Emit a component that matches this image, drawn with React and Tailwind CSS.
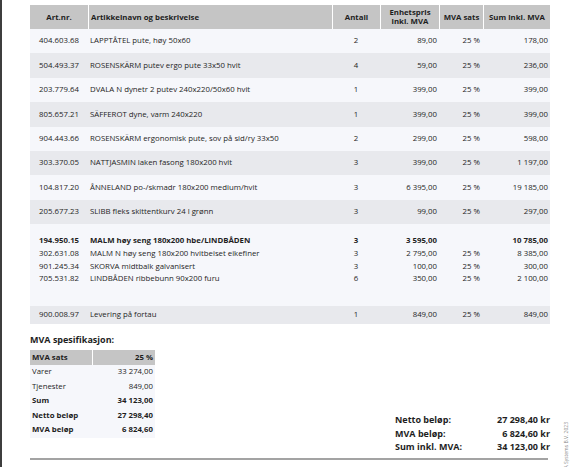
const cols = ['w-[58px]', 'w-[244px]', 'w-[48px]', 'w-[59px]', 'w-[44px]', 'w-[67px]']

const rows = [
  ['404.603.68', 'LAPPTÅTEL pute, høy 50x60', '2', '89,00', '25 %', '178,00'],
  ['504.493.37', 'ROSENSKÄRM putev ergo pute 33x50 hvit', '4', '59,00', '25 %', '236,00'],
  ['203.779.64', 'DVALA N dynetr 2 putev 240x220/50x60 hvit', '1', '399,00', '25 %', '399,00'],
  ['805.657.21', 'SÄFFEROT dyne, varm 240x220', '1', '399,00', '25 %', '399,00'],
  ['904.443.66', 'ROSENSKÄRM ergonomisk pute, sov på sid/ry 33x50', '2', '299,00', '25 %', '598,00'],
  ['303.370.05', 'NATTJASMIN laken fasong 180x200 hvit', '3', '399,00', '25 %', '1 197,00'],
  ['104.817.20', 'ÅNNELAND po-/skmadr 180x200 medium/hvit', '3', '6 395,00', '25 %', '19 185,00'],
  ['205.677.23', 'SLIBB fleks skittentkurv 24 l grønn', '3', '99,00', '25 %', '297,00'],
]

const group = [
  ['194.950.15', 'MALM høy seng 180x200 hbe/LINDBÅDEN', '3', '3 595,00', '', '10 785,00', true],
  ['302.631.08', 'MALM N høy seng 180x200 hvitbeiset eikefiner', '3', '2 795,00', '25 %', '8 385,00'],
  ['901.245.34', 'SKORVA midtbalk galvanisert', '3', '100,00', '25 %', '300,00'],
  ['705.531.82', 'LINDBÅDEN ribbebunn 90x200 furu', '6', '350,00', '25 %', '2 100,00'],
]

function Cells({ r }) {
  return (
    <>
      <div className={`${cols[0]} text-center`}>{r[0]}</div>
      <div className={`${cols[1]} pl-[2px] whitespace-nowrap`}>{r[1]}</div>
      <div className={`${cols[2]} text-center`}>{r[2]}</div>
      <div className={`${cols[3]} text-right pr-[2px]`}>{r[3]}</div>
      <div className={`${cols[4]} text-right pr-[3px]`}>{r[4]}</div>
      <div className={`${cols[5]} text-right pr-[2px]`}>{r[5]}</div>
    </>
  )
}

export default function App() {
  return (
    <div
      className="relative w-[575px] h-[467px] overflow-hidden bg-white border-l-2 border-[#3d3d3d] text-[#1e1e1e] text-[7.8px]"
      style={{ fontFamily: '"Open Sans", "Noto Sans", sans-serif' }}
    >
      <div className="pl-[28px] pt-[5px] w-[548px]">
        {/* items table */}
        <div className="w-[520px]">
          <div className="flex h-[24px] bg-[#c5c5c5] font-bold leading-[9px]">
            <div className={`${cols[0]} flex items-center justify-center`}>Art.nr.</div>
            <div className={`${cols[1]} flex items-center pl-[2px] border-l border-white`}>Artikkelnavn og beskrivelse</div>
            <div className={`${cols[2]} flex items-center justify-center border-l border-white`}>Antall</div>
            <div className={`${cols[3]} flex items-center justify-center text-center border-l border-white`}>
              Enhetspris<br />inkl. MVA
            </div>
            <div className={`${cols[4]} flex items-center justify-center border-l border-white`}>MVA sats</div>
            <div className={`${cols[5]} flex items-center justify-center border-l border-white`}>Sum inkl. MVA</div>
          </div>

          {rows.map((r, i) => (
            <div key={r[0]} className={`flex items-center h-[24.4px] ${i % 2 ? 'bg-[#e8e9ed]' : 'bg-[#f6f7fb]'}`}>
              <Cells r={r} />
            </div>
          ))}

          <div className="bg-[#f6f7fb] pt-[10.5px] pb-[20.5px]">
            {group.map((r) => (
              <div key={r[0]} className={`flex items-center h-[12.7px] ${r[6] ? 'font-bold' : ''}`}>
                <Cells r={r} />
              </div>
            ))}
          </div>

          <div className="flex items-center h-[18px] bg-[#e8e9ed]">
            <Cells r={['900.008.97', 'Levering på fortau', '1', '849,00', '25 %', '849,00']} />
          </div>
        </div>

        {/* MVA spec */}
        <div className="mt-[10px] font-bold text-[9px] leading-[12px]">MVA spesifikasjon:</div>
        <div className="mt-[4px] w-[125px] bg-[#f6f7fb] pb-[1px]">
          <div className="flex h-[15px] items-center bg-[#c5c5c5] font-bold">
            <div className="w-[62px] pl-[2px]">MVA sats</div>
            <div className="flex-1 h-full flex items-center justify-end pr-[2px] border-l border-white">25 %</div>
          </div>
          {[
            ['Varer', '33 274,00'],
            ['Tjenester', '849,00'],
            ['Sum', '34 123,00', true],
            ['Netto beløp', '27 298,40', true],
            ['MVA beløp', '6 824,60', true],
          ].map(([l, v, b]) => (
            <div key={l} className={`flex items-center justify-between h-[14.5px] px-[2px] ${b ? 'font-bold' : ''}`}>
              <span>{l}</span>
              <span>{v}</span>
            </div>
          ))}
        </div>

        <div className="flex justify-end -mt-[25px]">
          <div className="w-[155px] font-bold text-[9px]">
            {[
              ['Netto beløp:', '27 298,40 kr'],
              ['MVA beløp:', '6 824,60 kr'],
              ['Sum inkl. MVA:', '34 123,00 kr'],
            ].map(([l, v]) => (
              <div key={l} className="flex justify-between h-[13.5px] items-center">
                <span>{l}</span>
                <span>{v}</span>
              </div>
            ))}
          </div>
        </div>

        <div className="mt-[4px] h-[2px] w-[518px] bg-[#a3a3a3]" />
      </div>

      <div className="absolute left-[561px] top-[422px] text-[5px] text-[#8a8a8a] whitespace-nowrap [writing-mode:vertical-rl] rotate-180">
        © Inter IKEA Systems B.V. 2023
      </div>
    </div>
  )
}
